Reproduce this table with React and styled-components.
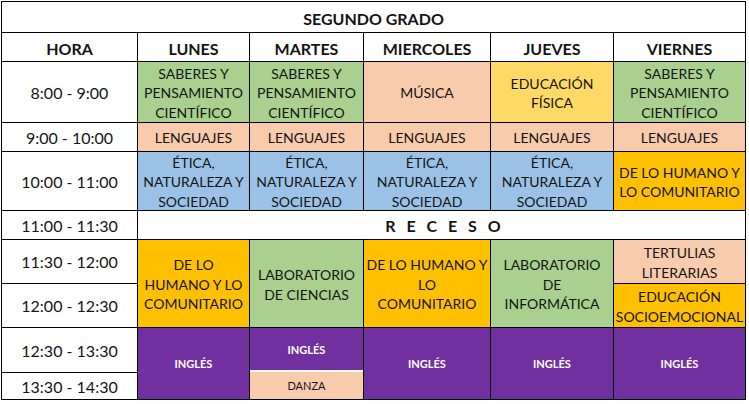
import React from 'react';
import styled, { createGlobalStyle } from 'styled-components';

const Global = createGlobalStyle`
  html, body {
    margin: 0;
    padding: 0;
    background: #fff;
  }
  body {
    font-family: Lato, "Liberation Sans", sans-serif;
    color: #141414;
  }
`;

const COLORS = {
  green: '#a9d08e',
  peach: '#f8cbad',
  yellow: '#ffd966',
  blue: '#9bc2e6',
  gold: '#ffc000',
  purple: '#7030a0',
};

const Page = styled.div`
  padding: 1px 0 0 1px;
`;

const Table = styled.div`
  display: grid;
  grid-template-columns: 135px 111px 113px 126px 122px 131px;
  grid-template-rows: 30px 28px 60px 28px 58px 28px 43px 43px 44px 26px;
  gap: 1px;
  padding: 1px;
  background: #000;
  width: fit-content;
`;

const Title = styled.div`
  grid-column: 1 / -1;
  background: #fff;
  display: flex;
  align-items: center;
  justify-content: center;
  font-weight: 700;
  font-size: 16px;
  padding-top: 2px;
`;

const HeadCell = styled.div`
  background: #fff;
  display: flex;
  align-items: flex-end;
  justify-content: center;
  font-weight: 700;
  font-size: 16px;
  padding-bottom: 3px;
`;

const TimeCell = styled.div`
  background: #fff;
  display: flex;
  align-items: center;
  justify-content: center;
  font-size: 16px;
`;

const Subject = styled.div`
  grid-row: ${(p) => (p.$rows ? `span ${p.$rows}` : 'auto')};
  background: ${(p) => COLORS[p.$bg]};
  display: flex;
  align-items: center;
  justify-content: center;
  text-align: center;
  font-size: 14px;
  line-height: 19.5px;
  padding-top: 2px;
`;

const English = styled(Subject)`
  color: #fff;
  font-weight: 700;
  font-size: 11px;
  padding-top: 0;
`;

const Receso = styled.div`
  grid-column: 2 / -1;
  background: #fff;
  display: flex;
  align-items: center;
  justify-content: center;
  font-weight: 700;
  font-size: 16px;
  letter-spacing: 3px;
  word-spacing: 1px;
  padding-left: 6px;
`;

const Split = styled.div`
  grid-row: span 2;
  display: flex;
  flex-direction: column;
  background: #fff;
`;

const SplitTop = styled.div`
  height: 42px;
  background: ${COLORS.purple};
  color: #fff;
  font-weight: 700;
  font-size: 11px;
  display: flex;
  align-items: center;
  justify-content: center;
`;

const SplitBottom = styled.div`
  margin-top: 2px;
  flex: 1;
  background: ${COLORS.peach};
  font-size: 11px;
  display: flex;
  align-items: center;
  justify-content: center;
`;

const lines = (arr) =>
  arr.map((l, i) => (
    <React.Fragment key={i}>
      {i > 0 && <br />}
      {l}
    </React.Fragment>
  ));

const SABERES = ['SABERES Y', 'PENSAMIENTO', 'CIENTÍFICO'];
const ETICA = ['ÉTICA,', 'NATURALEZA Y', 'SOCIEDAD'];

export default function App() {
  return (
    <Page>
      <Global />
      <Table>
        <Title>SEGUNDO GRADO</Title>

        <HeadCell>HORA</HeadCell>
        <HeadCell>LUNES</HeadCell>
        <HeadCell>MARTES</HeadCell>
        <HeadCell>MIERCOLES</HeadCell>
        <HeadCell>JUEVES</HeadCell>
        <HeadCell>VIERNES</HeadCell>

        <TimeCell>8:00 - 9:00</TimeCell>
        <Subject $bg="green">{lines(SABERES)}</Subject>
        <Subject $bg="green">{lines(SABERES)}</Subject>
        <Subject $bg="peach">MÚSICA</Subject>
        <Subject $bg="yellow">{lines(['EDUCACIÓN', 'FÍSICA'])}</Subject>
        <Subject $bg="green">{lines(SABERES)}</Subject>

        <TimeCell>9:00 - 10:00</TimeCell>
        <Subject $bg="peach">LENGUAJES</Subject>
        <Subject $bg="peach">LENGUAJES</Subject>
        <Subject $bg="peach">LENGUAJES</Subject>
        <Subject $bg="peach">LENGUAJES</Subject>
        <Subject $bg="peach">LENGUAJES</Subject>

        <TimeCell>10:00 - 11:00</TimeCell>
        <Subject $bg="blue">{lines(ETICA)}</Subject>
        <Subject $bg="blue">{lines(ETICA)}</Subject>
        <Subject $bg="blue">{lines(ETICA)}</Subject>
        <Subject $bg="blue">{lines(ETICA)}</Subject>
        <Subject $bg="gold">{lines(['DE LO HUMANO Y', 'LO COMUNITARIO'])}</Subject>

        <TimeCell>11:00 - 11:30</TimeCell>
        <Receso>R E C E S O</Receso>

        <TimeCell>11:30 - 12:00</TimeCell>
        <Subject $bg="gold" $rows={2}>{lines(['DE LO', 'HUMANO Y LO', 'COMUNITARIO'])}</Subject>
        <Subject $bg="green" $rows={2}>{lines(['LABORATORIO', 'DE CIENCIAS'])}</Subject>
        <Subject $bg="gold" $rows={2}>{lines(['DE LO HUMANO Y', 'LO', 'COMUNITARIO'])}</Subject>
        <Subject $bg="green" $rows={2}>{lines(['LABORATORIO', 'DE', 'INFORMÁTICA'])}</Subject>
        <Subject $bg="peach">{lines(['TERTULIAS', 'LITERARIAS'])}</Subject>

        <TimeCell>12:00 - 12:30</TimeCell>
        <Subject $bg="gold">{lines(['EDUCACIÓN', 'SOCIOEMOCIONAL'])}</Subject>

        <TimeCell>12:30 - 13:30</TimeCell>
        <English $bg="purple" $rows={2}>INGLÉS</English>
        <Split>
          <SplitTop>INGLÉS</SplitTop>
          <SplitBottom>DANZA</SplitBottom>
        </Split>
        <English $bg="purple" $rows={2}>INGLÉS</English>
        <English $bg="purple" $rows={2}>INGLÉS</English>
        <English $bg="purple" $rows={2}>INGLÉS</English>

        <TimeCell>13:30 - 14:30</TimeCell>
      </Table>
    </Page>
  );
}
